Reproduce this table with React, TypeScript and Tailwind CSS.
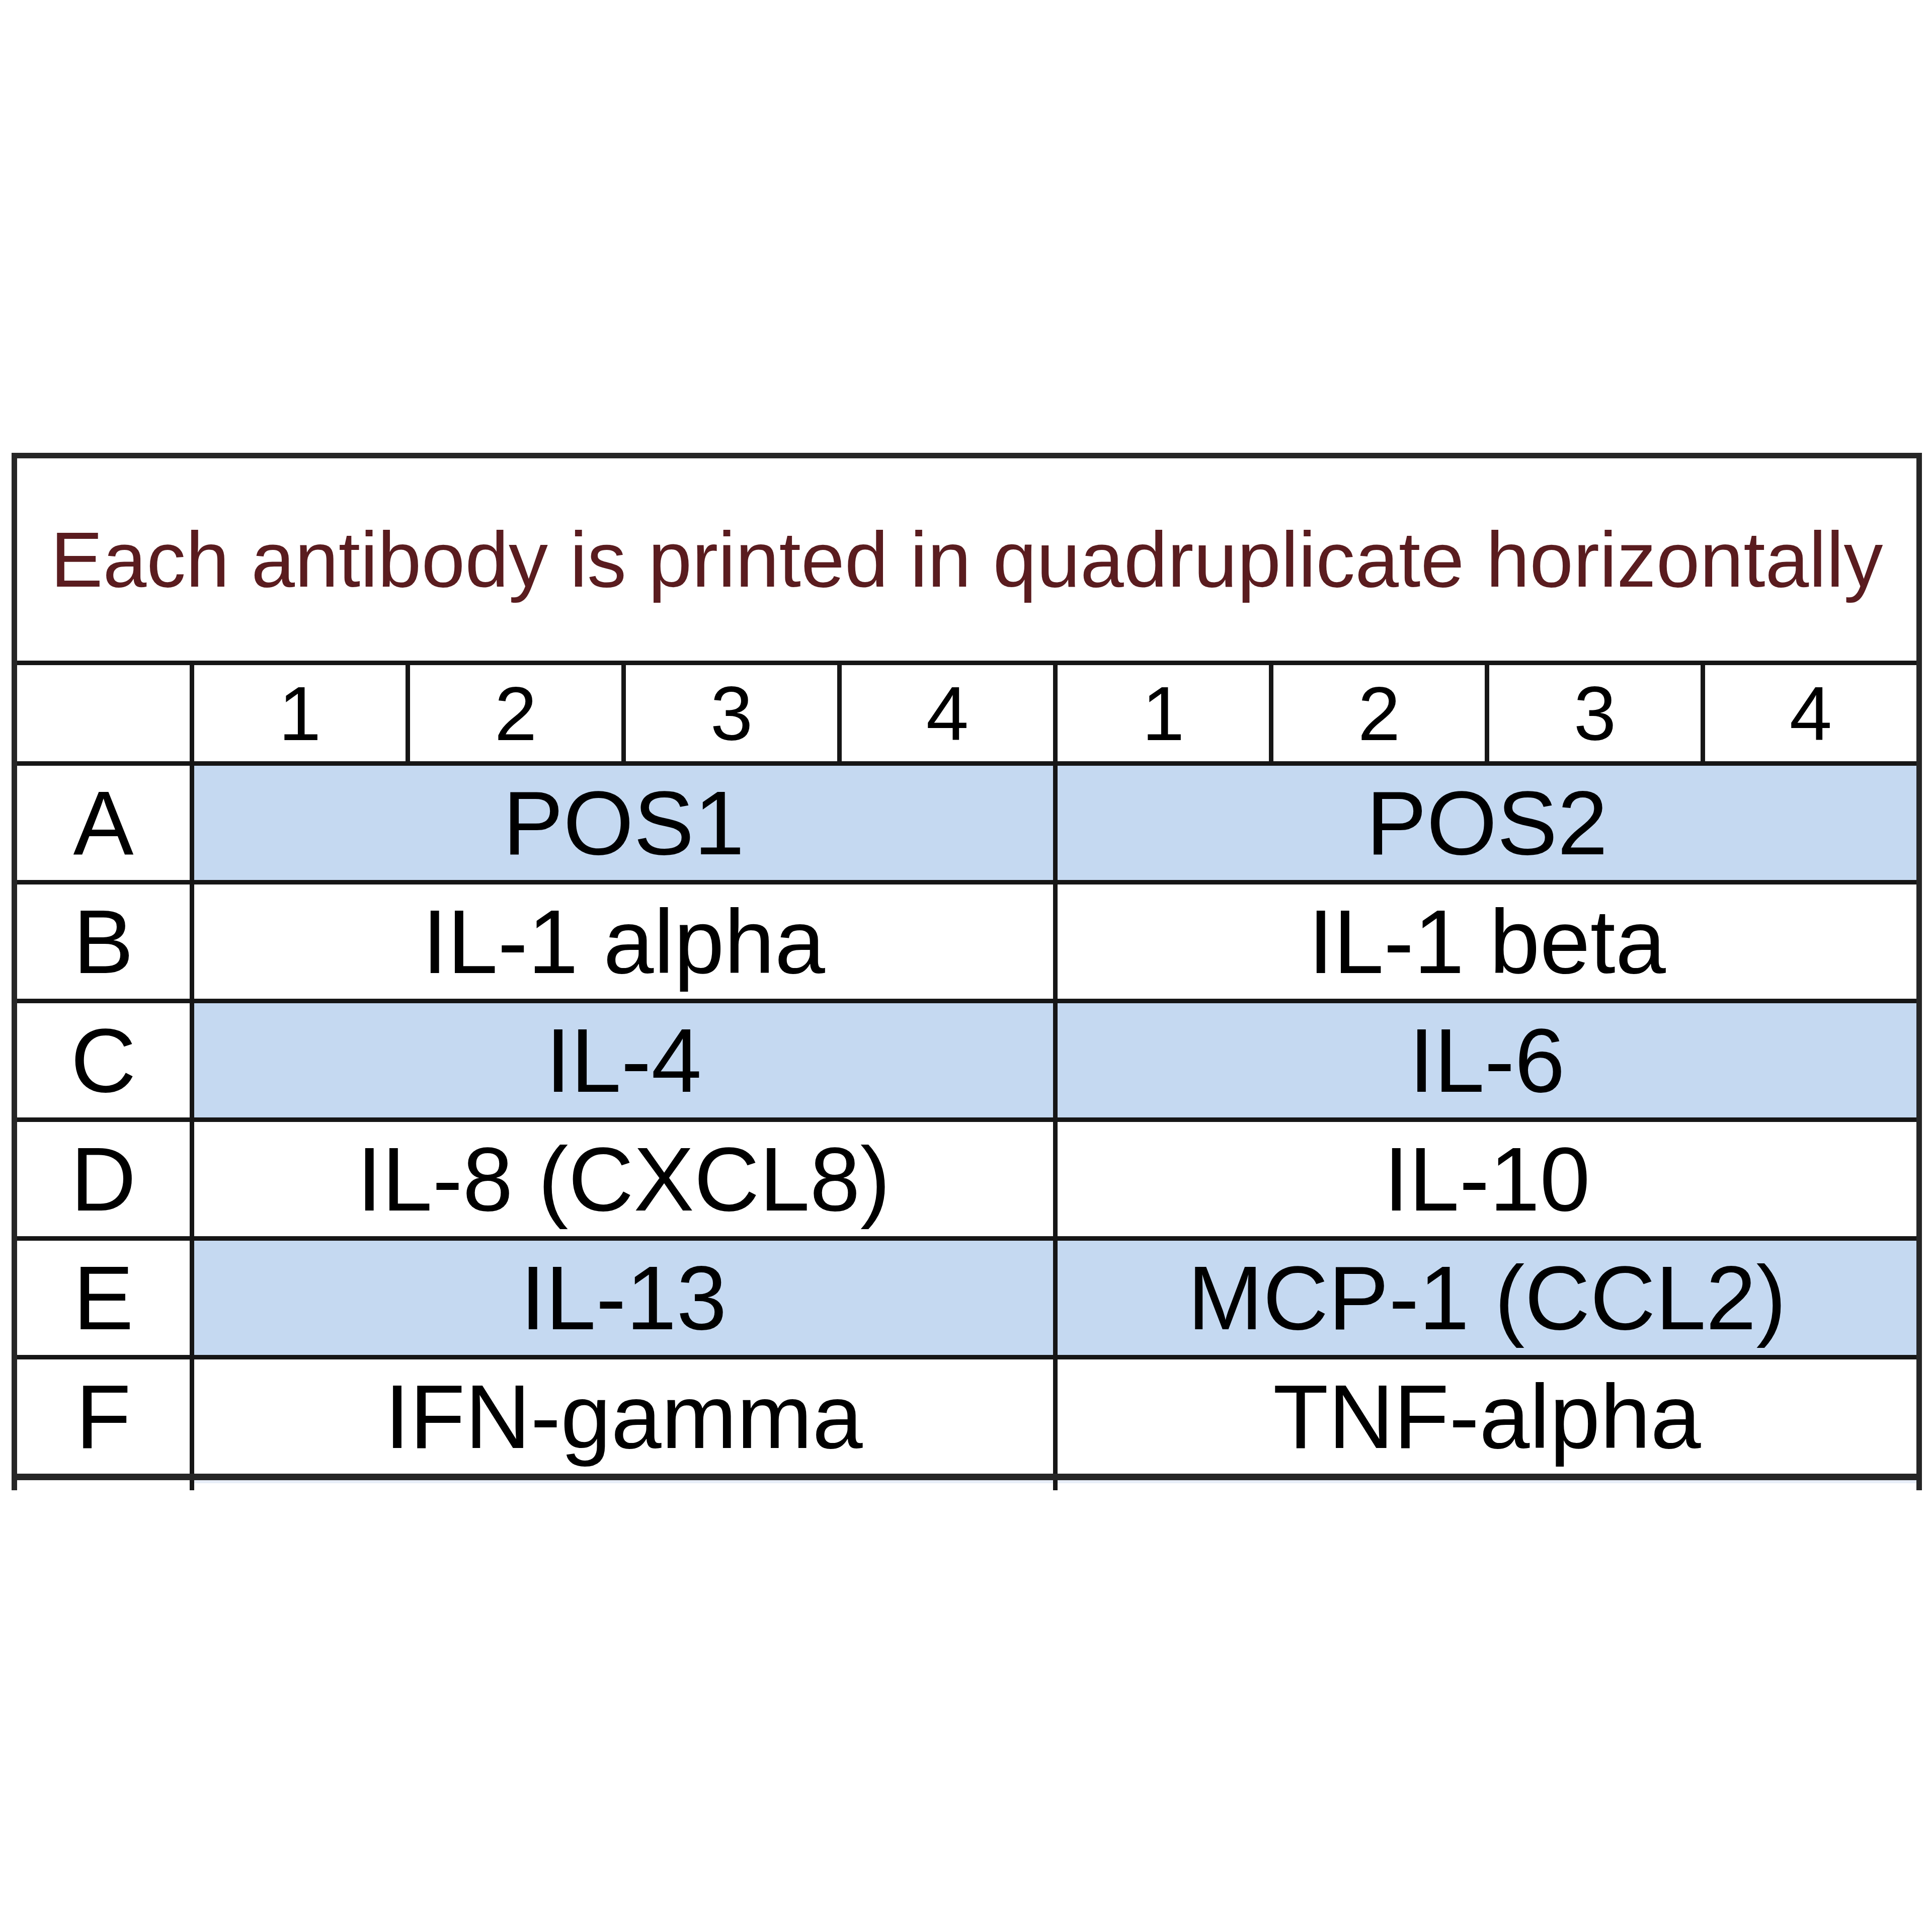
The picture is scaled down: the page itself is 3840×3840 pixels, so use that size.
import React from "react";

// Antibody array map: each antibody is spotted four times in a row
const rows: { label: string; left: string; right: string; shaded: boolean }[] = [
  { label: "A", left: "POS1", right: "POS2", shaded: true },
  { label: "B", left: "IL-1 alpha", right: "IL-1 beta", shaded: false },
  { label: "C", left: "IL-4", right: "IL-6", shaded: true },
  { label: "D", left: "IL-8 (CXCL8)", right: "IL-10", shaded: false },
  { label: "E", left: "IL-13", right: "MCP-1 (CCL2)", shaded: true },
  { label: "F", left: "IFN-gamma", right: "TNF-alpha", shaded: false },
];

const spots = [1, 2, 3, 4, 1, 2, 3, 4];

const App: React.FC = () => {
  return (
    <div
      className="w-[3840px] h-[3840px] bg-white pt-[900px] pl-[23px]"
      style={{ fontFamily: '"Liberation Sans", Arial, sans-serif' }}
    >
      <div className="w-[3797px]">
        {/* Table body: the dark background shows through the gaps as grid lines */}
        <div className="grid grid-cols-[343px_repeat(8,1fr)] gap-[9px] bg-[#161616] border-x-[11px] border-t-[11px] border-b-[13px] border-[#262626]">
          {/* Title row */}
          <div className="col-span-9 h-[402px] bg-white flex items-center justify-center text-[156px] leading-none text-[#5a1c1f]">
            Each antibody is printed in quadruplicate horizontally
          </div>

          {/* Spot number header */}
          <div className="h-[191px] bg-white" />
          {spots.map((n, i) => (
            <div
              key={`spot-${i}`}
              className="h-[191px] bg-white flex items-center justify-center text-[152px] leading-none text-black"
            >
              {n}
            </div>
          ))}

          {/* Antibody rows */}
          {rows.map((row) => (
            <React.Fragment key={row.label}>
              <div className="h-[227px] bg-white flex items-center justify-center text-[180px] leading-none text-black">
                {row.label}
              </div>
              <div
                className={`col-span-4 h-[227px] flex items-center justify-center text-[180px] leading-none text-black ${
                  row.shaded ? "bg-[#c5d9f1]" : "bg-white"
                }`}
              >
                {row.left}
              </div>
              <div
                className={`col-span-4 h-[227px] flex items-center justify-center text-[180px] leading-none text-black ${
                  row.shaded ? "bg-[#c5d9f1]" : "bg-white"
                }`}
              >
                {row.right}
              </div>
            </React.Fragment>
          ))}
        </div>

        {/* Line ends sticking out below the bottom border */}
        <div className="grid grid-cols-[11px_343px_9px_1fr_9px_1fr_11px] h-[20px]">
          <div className="bg-[#262626]" />
          <div />
          <div className="bg-[#161616]" />
          <div className="bg-[#e8eef8] h-[6px]" />
          <div className="bg-[#161616]" />
          <div className="bg-[#e8eef8] h-[6px]" />
          <div className="bg-[#262626]" />
        </div>
      </div>
    </div>
  );
};

export default App;
